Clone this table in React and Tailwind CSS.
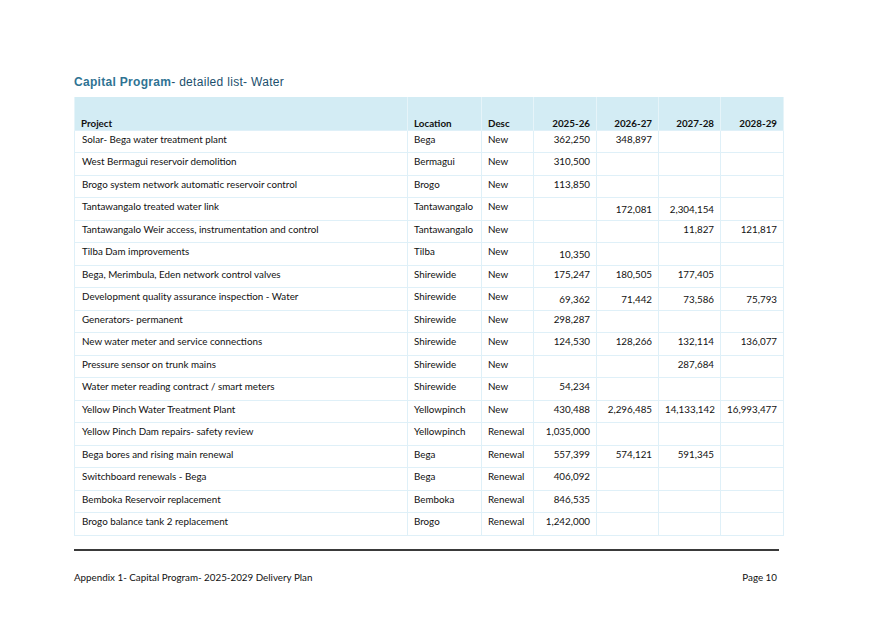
const rows = [
  ['Solar- Bega water treatment plant', 'Bega', 'New', '362,250', '348,897', '', ''],
  ['West Bermagui reservoir demolition', 'Bermagui', 'New', '310,500', '', '', ''],
  ['Brogo system network automatic reservoir control', 'Brogo', 'New', '113,850', '', '', ''],
  ['Tantawangalo treated water link', 'Tantawangalo', 'New', '', '172,081', '2,304,154', '', [4, 5]],
  ['Tantawangalo Weir access, instrumentation and control', 'Tantawangalo', 'New', '', '', '11,827', '121,817'],
  ['Tilba Dam improvements', 'Tilba', 'New', '10,350', '', '', '', [3]],
  ['Bega, Merimbula, Eden network control valves', 'Shirewide', 'New', '175,247', '180,505', '177,405', ''],
  ['Development quality assurance inspection - Water', 'Shirewide', 'New', '69,362', '71,442', '73,586', '75,793', [3, 4, 5, 6]],
  ['Generators- permanent', 'Shirewide', 'New', '298,287', '', '', ''],
  ['New water meter and service connections', 'Shirewide', 'New', '124,530', '128,266', '132,114', '136,077'],
  ['Pressure sensor on trunk mains', 'Shirewide', 'New', '', '', '287,684', ''],
  ['Water meter reading contract / smart meters', 'Shirewide', 'New', '54,234', '', '', ''],
  ['Yellow Pinch Water Treatment Plant', 'Yellowpinch', 'New', '430,488', '2,296,485', '14,133,142', '16,993,477'],
  ['Yellow Pinch Dam repairs- safety review', 'Yellowpinch', 'Renewal', '1,035,000', '', '', ''],
  ['Bega bores and rising main renewal', 'Bega', 'Renewal', '557,399', '574,121', '591,345', ''],
  ['Switchboard renewals - Bega', 'Bega', 'Renewal', '406,092', '', '', ''],
  ['Bemboka Reservoir replacement', 'Bemboka', 'Renewal', '846,535', '', '', ''],
  ['Brogo balance tank 2 replacement', 'Brogo', 'Renewal', '1,242,000', '', '', ''],
];

const headers = ['Project', 'Location', 'Desc', '2025-26', '2026-27', '2027-28', '2028-29'];
const widths = ['w-[333px]', 'w-[74px]', 'w-[52px]', 'w-[63px]', 'w-[62px]', 'w-[62px]', 'w-[63px]'];

export default function App() {
  return (
    <div className="min-h-[620px] w-[876px] bg-white font-['Lato',sans-serif] text-[#111]">
      <div className="ml-[74px] w-[709px] pt-[75px]">
        {/* ── Title ─────────────────────────────── */}
        <h1 className="h-[22px] font-['Liberation_Sans',sans-serif] text-[12px] leading-[15px] tracking-[0.3px]">
          <span className="font-bold text-[#2f7393]">Capital Program</span>
          <span className="text-[#1b4f6d]">- detailed list- Water</span>
        </h1>

        {/* ── Table ─────────────────────────────── */}
        <table className="w-[709px] table-fixed border-collapse text-[9.8px] leading-[12px]">
          <colgroup>
            {widths.map((w, i) => <col key={i} className={w} />)}
          </colgroup>
          <thead>
            <tr className="h-[33px] bg-[#d3ecf4]">
              {headers.map((h, i) => (
                <th
                  key={h}
                  className={`border-x border-[#e6f4f9] px-[6px] pb-[1px] align-bottom font-bold ${i > 2 ? 'text-right' : 'text-left'}`}
                >
                  {h}
                </th>
              ))}
            </tr>
          </thead>
          <tbody>
            {rows.map((r, ri) => {
              const low = r[7] || [];
              return (
                <tr key={ri} className="h-[22.5px]">
                  {r.slice(0, 7).map((c, ci) => (
                    <td
                      key={ci}
                      className={`border border-[#dff0f8] px-[6px] align-top ${low.includes(ci) ? 'pt-[5px]' : 'pt-[2px]'} ${ci > 2 ? 'text-right' : 'text-left'} ${ci === 0 ? 'pl-[7px]' : ''}`}
                    >
                      {c}
                    </td>
                  ))}
                </tr>
              );
            })}
          </tbody>
        </table>

        {/* ── Footer ─────────────────────────────── */}
        <div className="mt-[13px] h-[2px] w-[705px] bg-[#3a3a3a]" />
        <div className="mt-[20px] flex w-[703px] justify-between text-[9.8px] leading-[12px]">
          <span>Appendix 1- Capital Program- 2025-2029 Delivery Plan</span>
          <span>Page 10</span>
        </div>
      </div>
    </div>
  );
}
